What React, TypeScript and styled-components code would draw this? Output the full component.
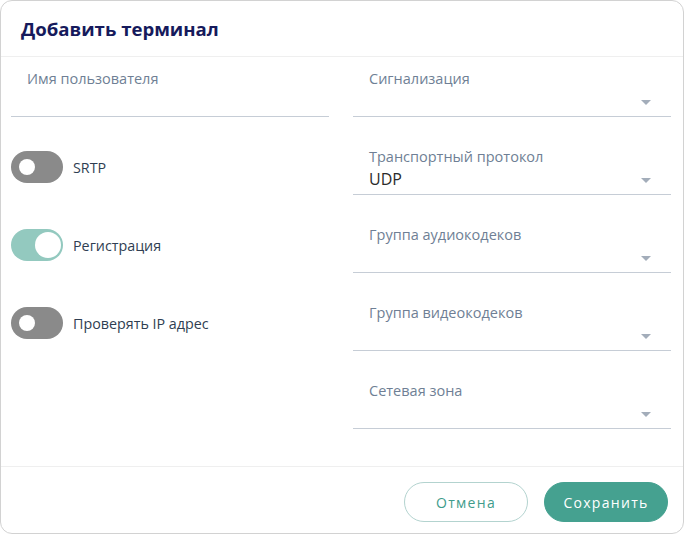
import React, {useState} from "react";
import styled, {createGlobalStyle} from "styled-components";

const GlobalStyle = createGlobalStyle`
    html, body {
        margin: 0;
        padding: 0;
        background: #ffffff;
    }

    body {
        font-family: "Open Sans", "Noto Sans", sans-serif;
    }

    * {
        box-sizing: border-box;
    }
`;

const Dialog = styled.div`
    width: 684px;
    height: 534px;
    border: 1px solid #d2d2d2;
    border-radius: 12px;
    background: #ffffff;
    display: flex;
    flex-direction: column;
    overflow: hidden;
`;

const Header = styled.div`
    height: 56px;
    flex-shrink: 0;
    display: flex;
    align-items: center;
    padding: 0 20px;
    border-bottom: 1px solid #efefef;
`;

const Title = styled.h2`
    margin: 0;
    font-size: 18.6px;
    font-weight: 700;
    color: #161a5c;
`;

const Body = styled.div`
    flex: 1;
    display: grid;
    grid-template-columns: 318px 318px;
    column-gap: 24px;
    padding: 10px 12px 0 10px;
`;

const Column = styled.div`
    display: flex;
    flex-direction: column;
    gap: 28px;
`;

const LeftColumn = styled.div`
    display: flex;
    flex-direction: column;
`;

const Field = styled.div`
    height: 50px;
    display: flex;
    flex-direction: column;
    border-bottom: 1px solid #c6cdd6;
    padding: 0 16px;
    position: relative;
`;

const FieldLabel = styled.div`
    height: 24px;
    line-height: 24px;
    font-size: 14.5px;
    color: #6f7f95;
`;

const FieldValue = styled.div`
    flex: 1;
    font-size: 16px;
    line-height: 20px;
    color: #2b2b2b;
    display: flex;
    align-items: center;
    padding-bottom: 8px;
`;

const Arrow = styled.span`
    position: absolute;
    right: 20px;
    bottom: 11px;
    width: 0;
    height: 0;
    border-left: 5px solid transparent;
    border-right: 5px solid transparent;
    border-top: 5px solid #a3adba;
`;

const ToggleList = styled.div`
    margin-top: 11px;
    display: flex;
    flex-direction: column;
`;

const ToggleRow = styled.label`
    height: 78px;
    display: flex;
    align-items: center;
    gap: 10px;
    cursor: pointer;
`;

const Track = styled.span<{ $on: boolean }>`
    width: 52px;
    height: 32px;
    border-radius: 16px;
    background: ${(p) => (p.$on ? "#93c9bf" : "#8a8a8a")};
    position: relative;
    flex-shrink: 0;
    transition: background 0.2s;
`;

const Knob = styled.span<{ $on: boolean }>`
    position: absolute;
    top: 50%;
    left: ${(p) => (p.$on ? "24px" : "8px")};
    width: ${(p) => (p.$on ? "26px" : "16px")};
    height: ${(p) => (p.$on ? "26px" : "16px")};
    transform: translateY(-50%);
    border-radius: 50%;
    background: #ffffff;
    transition: all 0.2s;
`;

const ToggleText = styled.span`
    font-size: 14.3px;
    color: #2f3e52;
`;

const Footer = styled.div`
    height: 67px;
    flex-shrink: 0;
    border-top: 1px solid #efefef;
    display: flex;
    align-items: center;
    justify-content: flex-end;
    gap: 16px;
    padding: 4px 15px 0 0;
`;

const Button = styled.button<{ $primary?: boolean }>`
    width: 124px;
    height: 40px;
    border-radius: 20px;
    font-family: "Open Sans", "Noto Sans", sans-serif;
    font-size: 14px;
    font-weight: 400;
    letter-spacing: 1.3px;
    cursor: pointer;
    border: 1px solid ${(p) => (p.$primary ? "#45a190" : "#b3d3cf")};
    background: ${(p) => (p.$primary ? "#45a190" : "#ffffff")};
    color: ${(p) => (p.$primary ? "#ffffff" : "#3f9c8b")};
`;

interface SelectProps {
    label: string;
    value?: string;
}

const SelectField: React.FC<SelectProps> = ({label, value}) => (
    <Field>
        <FieldLabel>{label}</FieldLabel>
        <FieldValue>{value}</FieldValue>
        <Arrow/>
    </Field>
);

interface ToggleProps {
    label: string;
    on: boolean;
    onToggle: () => void;
}

const Toggle: React.FC<ToggleProps> = ({label, on, onToggle}) => (
    <ToggleRow onClick={onToggle}>
        <Track $on={on}>
            <Knob $on={on}/>
        </Track>
        <ToggleText>{label}</ToggleText>
    </ToggleRow>
);

export default function App() {
    const [toggles, setToggles] = useState({srtp: false, registration: true, checkIp: false});

    const flip = (key: keyof typeof toggles) =>
        setToggles((prev) => ({...prev, [key]: !prev[key]}));

    return (
        <>
            <GlobalStyle/>
            <Dialog>
                <Header>
                    <Title>Добавить терминал</Title>
                </Header>
                <Body>
                    <LeftColumn>
                        <Field>
                            <FieldLabel>Имя пользователя</FieldLabel>
                            <FieldValue/>
                        </Field>
                        <ToggleList>
                            <Toggle label="SRTP" on={toggles.srtp} onToggle={() => flip("srtp")}/>
                            <Toggle label="Регистрация" on={toggles.registration}
                                    onToggle={() => flip("registration")}/>
                            <Toggle label="Проверять IP адрес" on={toggles.checkIp}
                                    onToggle={() => flip("checkIp")}/>
                        </ToggleList>
                    </LeftColumn>
                    <Column>
                        <SelectField label="Сигнализация"/>
                        <SelectField label="Транспортный протокол" value="UDP"/>
                        <SelectField label="Группа аудиокодеков"/>
                        <SelectField label="Группа видеокодеков"/>
                        <SelectField label="Сетевая зона"/>
                    </Column>
                </Body>
                <Footer>
                    <Button>Отмена</Button>
                    <Button $primary>Сохранить</Button>
                </Footer>
            </Dialog>
        </>
    );
}
